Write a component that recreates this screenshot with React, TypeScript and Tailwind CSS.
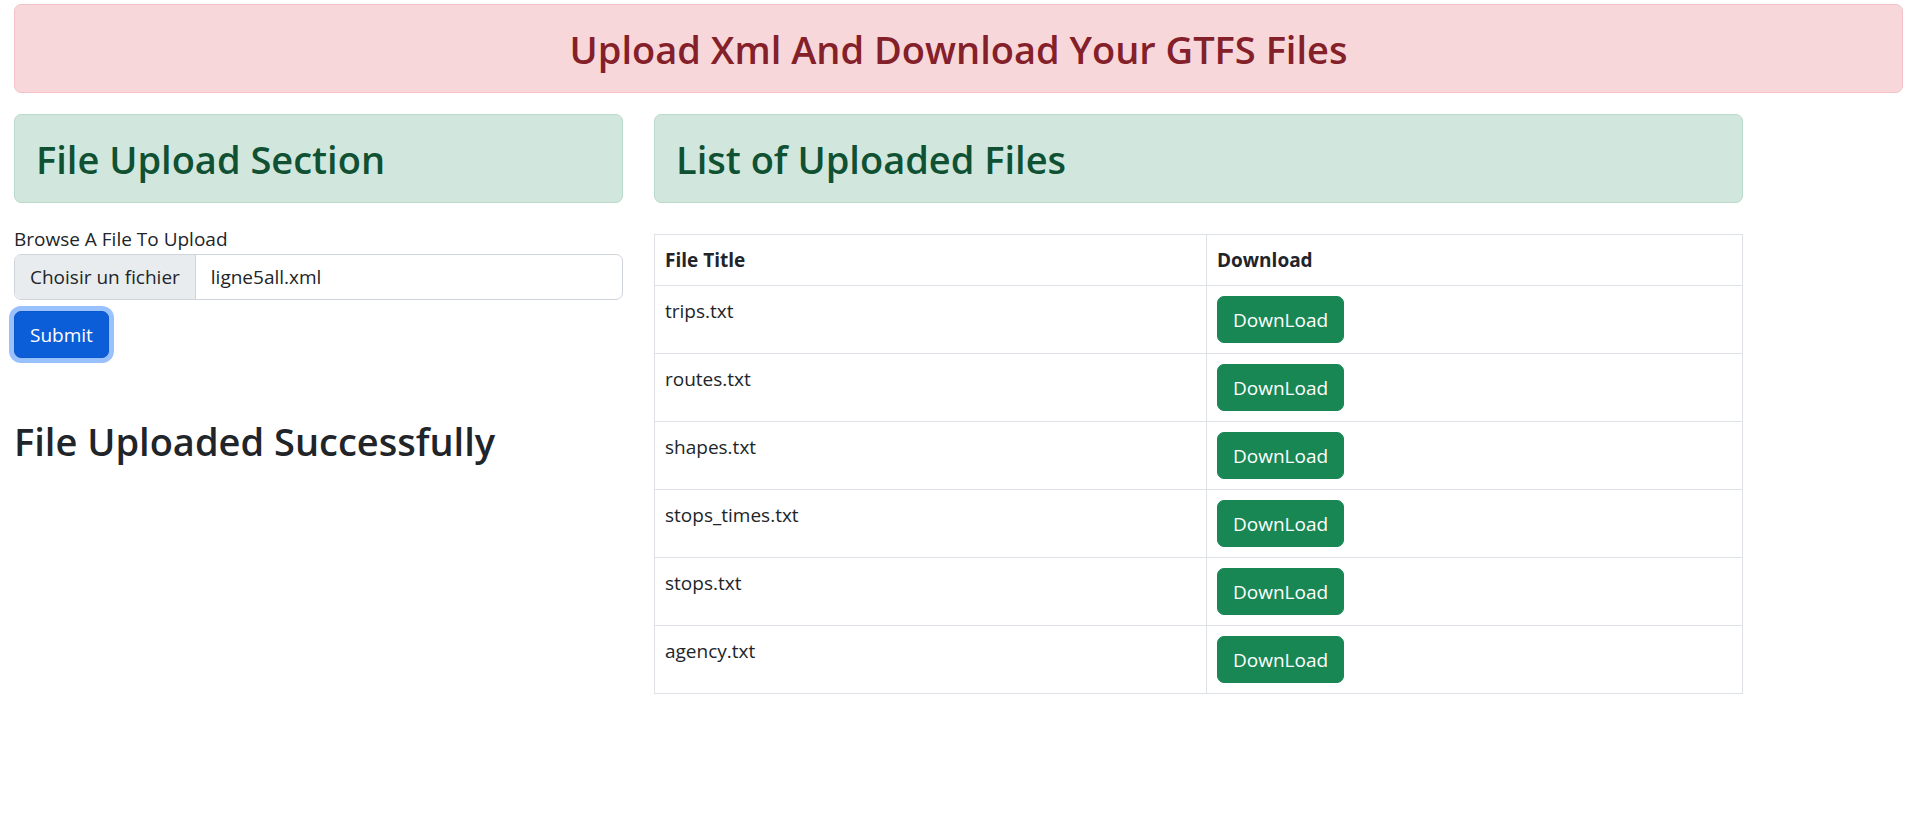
import React from "react";

const files = ["trips.txt", "routes.txt", "shapes.txt", "stops_times.txt", "stops.txt", "agency.txt"];

function SuccessHeader({ title }: { title: string }) {
  return (
    <div className="h-[89px] flex items-center px-[21px] rounded-[7px] border border-[#badbcc] bg-[#d1e7dd] text-[#0f5132]">
      <h2 className="text-[38px] leading-[48px] font-semibold">{title}</h2>
    </div>
  );
}

export default function App() {
  return (
    <div className="min-h-screen bg-white text-[#212529] text-[19px] leading-[30px] font-['Segoe_UI','Open_Sans',sans-serif] pt-[4px] pl-[14px] pr-[10px]">
      {/* Page banner */}
      <div className="h-[89px] flex items-center justify-center rounded-[7px] border border-[#f5c2c7] bg-[#f8d7da] text-[#842029]">
        <h2 className="text-[38px] leading-[48px] font-semibold">Upload Xml And Download Your GTFS Files</h2>
      </div>

      <div className="mt-[21px] flex items-start gap-[31px]">
        {/* Upload column */}
        <div className="w-[609px]">
          <SuccessHeader title="File Upload Section" />

          <form className="mt-[21px]" onSubmit={(e) => e.preventDefault()}>
            <label className="block">Browse A File To Upload</label>
            <div className="h-[46px] flex rounded-[7px] border border-[#ced4da] overflow-hidden bg-white">
              <span className="flex items-center px-[15px] bg-[#e9ecef] border-r border-[#ced4da]">
                Choisir un fichier
              </span>
              <span className="flex items-center px-[15px]">ligne5all.xml</span>
            </div>
            <button
              type="submit"
              className="mt-[11px] h-[47px] px-[15px] rounded-[7px] border border-[#0a58ca] bg-[#0b5ed7] text-white shadow-[0_0_0_5px_rgba(49,132,253,0.5)]"
            >
              Submit
            </button>
          </form>

          <h2 className="mt-[59px] text-[38px] leading-[48px] font-semibold">File Uploaded Successfully</h2>
        </div>

        {/* Files column */}
        <div className="w-[1089px]">
          <SuccessHeader title="List of Uploaded Files" />

          <table className="mt-[31px] w-full table-fixed border-collapse border border-[#dee2e6] text-left align-top">
            <thead>
              <tr>
                <th className="w-[552px] border border-[#dee2e6] p-[10px] font-bold">File Title</th>
                <th className="border border-[#dee2e6] p-[10px] font-bold">Download</th>
              </tr>
            </thead>
            <tbody>
              {files.map((f) => (
                <tr key={f}>
                  <td className="border border-[#dee2e6] p-[10px] align-top">{f}</td>
                  <td className="border border-[#dee2e6] p-[10px] align-top">
                    <button className="h-[47px] px-[15px] rounded-[7px] border border-[#198754] bg-[#198754] text-white">
                      DownLoad
                    </button>
                  </td>
                </tr>
              ))}
            </tbody>
          </table>
        </div>
      </div>
    </div>
  );
}
